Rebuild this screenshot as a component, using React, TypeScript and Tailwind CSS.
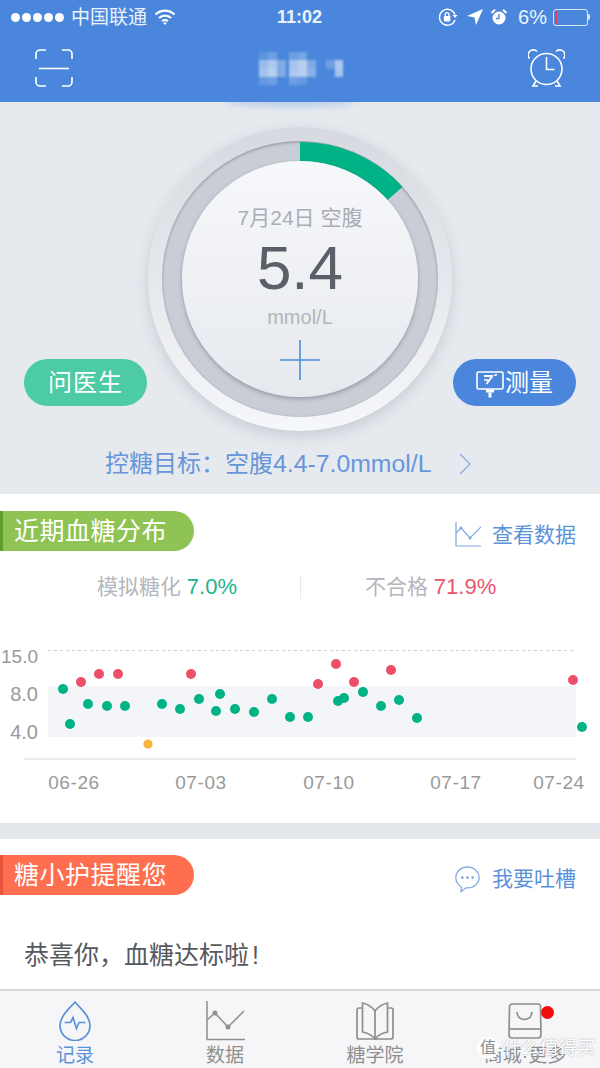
import React from "react";

const FONT = { fontFamily: '"Liberation Sans","Noto Sans CJK SC",sans-serif' };

const green: [number, number][] = [[63,39],[70,74],[88,54],[107,56],[125,56],[162,54],[180,59],[199,49],[216,61],[220,44],[235,59],[254,62],[272,49],[290,67],[308,67],[338,51],[344,48],[363,42],[381,56],[399,50],[417,68],[582,77]];
const red: [number, number][] = [[81,32],[99,24],[118,24],[191,24],[318,34],[336,14],[354,32],[391,20],[573,30]];

const mosaic: number[][] = [
  [258,50,9,8,.1],[267,50,9,8,.2],[288,50,9,8,.2],[297,50,9,8,.25],
  [258,58,9,9,.45],[267,58,9,9,.55],[276,58,9,9,.3],[288,58,9,9,.5],[297,58,9,9,.6],[306,58,9,9,.3],[325,58,9,9,.2],[334,58,9,9,.55],
  [258,67,9,8,.5],[267,67,9,8,.6],[276,67,9,8,.3],[288,67,9,8,.55],[297,67,9,8,.6],[306,67,9,8,.35],[334,67,9,8,.5],
  [258,75,9,8,.15],[267,75,9,8,.2],[288,75,9,8,.2],[297,75,9,8,.15],
];

function Wifi() {
  return (
    <svg width="22" height="18" viewBox="0 0 22 18" fill="none" stroke="white" strokeWidth="2.2">
      <path d="M1.5 6.5a13.5 13.5 0 0 1 19 0" />
      <path d="M5 10a8.6 8.6 0 0 1 12 0" />
      <path d="M8.2 13.2a4 4 0 0 1 5.6 0" />
      <path d="M11 17l-1.8-2a2.6 2.6 0 0 1 3.6 0z" fill="white" stroke="none" />
    </svg>
  );
}

function StatusRight() {
  return (
    <div className="flex items-center">
      <svg width="21" height="21" viewBox="0 0 21 21" fill="none" stroke="white" strokeWidth="1.4" className="mr-[9px]">
        <path d="M18 13a8 8 0 1 1 0-5.5" />
        <path d="M15.5 8h5l-2.5 3z" fill="white" stroke="none" />
        <rect x="6.8" y="9" width="6.6" height="5.4" rx=".8" fill="white" stroke="none" />
        <path d="M8.3 9V7.4a1.8 1.8 0 0 1 3.6 0V9" />
      </svg>
      <svg width="16" height="16" viewBox="0 0 16 16" className="mr-[8px]">
        <path d="M16 0 L9 16 L7.6 8.4 L0 7z" fill="white" />
      </svg>
      <svg width="16" height="17" viewBox="0 0 16 17" className="mr-[11px]">
        <circle cx="8" cy="9" r="6.5" fill="white" />
        <path d="M8 5v4.5H5" stroke="#4a87dc" strokeWidth="1.4" fill="none" />
        <path d="M0.5 4 L4 0.8 M15.5 4 L12 0.8" stroke="white" strokeWidth="2" />
      </svg>
      <span className="text-[20px] leading-none text-white/90 mr-[6px]">6%</span>
      <div className="flex items-center">
        <div className="w-[35px] h-[17px] rounded-[3px] border border-white/80 p-[1px] flex">
          <div className="w-[2px] h-full bg-[#e8405a]" />
        </div>
        <div className="w-[2px] h-[6px] bg-white/80 rounded-r-sm" />
      </div>
    </div>
  );
}

function ScanIcon() {
  return (
    <svg width="38" height="38" viewBox="0 0 38 38" fill="none" stroke="white" strokeWidth="1.6">
      <path d="M1 10V5a4 4 0 0 1 4-4h6" />
      <path d="M27 1h6a4 4 0 0 1 4 4v5" />
      <path d="M1 28v5a4 4 0 0 0 4 4h6" />
      <path d="M27 37h6a4 4 0 0 0 4-4v-5" />
      <path d="M4 19.5h30" />
    </svg>
  );
}

function AlarmIcon() {
  return (
    <svg width="37" height="38" viewBox="0 0 37 38" fill="none" stroke="white" strokeWidth="1.6">
      <circle cx="18.5" cy="20" r="15.5" />
      <path d="M18.5 8v12.5h8" />
      <path d="M1.5 9.5a5 5 0 0 1 7.5-7" />
      <path d="M35.5 9.5a5 5 0 0 0-7.5-7" />
      <path d="M8 32l-3 5h5M29 32l3 5h-5" />
    </svg>
  );
}

function MeterIcon() {
  return (
    <svg width="28" height="27" viewBox="0 0 28 27" fill="none" stroke="white" strokeWidth="1.6" className="mr-[1px] mt-[4px]">
      <rect x="1" y="1" width="26" height="17" rx="1.5" />
      <path d="M8 5h8a3 3 0 0 1-1.5 2.5L10.5 13" strokeWidth="2" />
      <path d="M8 9h4" strokeWidth="1.6" />
      <path d="M18 4.5l3-1" />
      <path d="M10 18.500h8v3h-8z" fill="white" stroke="none" />
      <path d="M12.500 21.500h3v5h-3z" fill="white" stroke="none" />
    </svg>
  );
}

function Gauge() {
  return (
    <div className="w-[304px] h-[304px] rounded-full bg-gradient-to-b from-[#d6d9df] to-[#f6f7fa] shadow-[0_5px_14px_rgba(90,100,120,0.22)] flex items-center justify-center shrink-0">
      <div className="relative w-[276px] h-[276px] rounded-full bg-[#c9cdd5] shadow-[inset_0_1px_3px_rgba(60,70,90,0.45)] flex items-center justify-center">
        <svg width="276" height="276" viewBox="0 0 276 276" className="absolute left-0 top-0">
          <path d="M138 1A137 137 0 0 1 240.6 45.7L225.7 59.1A118 118 0 0 0 138 20Z" fill="#00b386" />
        </svg>
        <div className="relative w-[236px] h-[236px] rounded-full bg-gradient-to-b from-[#f7f8fb] to-[#e6e9ee] shadow-[0_2px_4px_rgba(70,80,100,0.4)] flex flex-col items-center pt-[44px]">
          <div className="text-[21px] leading-[26px] text-[#a9adb4] whitespace-nowrap">7月24日 空腹</div>
          <div className="text-[62px] leading-[72px] mt-[1px] text-[#5b6068]">5.4</div>
          <div className="text-[20px] leading-[22px] mt-[2px] text-[#b2b5bb]">mmol/L</div>
          <svg width="42" height="42" viewBox="0 0 42 42" className="mt-[11px]" stroke="#4f8ade" strokeWidth="1.6">
            <path d="M21 1v40M1 21h40" />
          </svg>
        </div>
      </div>
    </div>
  );
}

function Pill({ children, bg, stripe }: { children: React.ReactNode; bg: string; stripe: string }) {
  return (
    <div className={`w-[194px] h-[40px] rounded-r-[20px] flex items-center overflow-hidden ${bg}`}>
      <div className={`w-[3px] h-full ${stripe}`} />
      <span className="ml-[11px] text-[25px] leading-none text-white tracking-[0.5px] whitespace-nowrap">{children}</span>
    </div>
  );
}

function Chart() {
  return (
    <svg width="600" height="150" viewBox="0 0 600 150" className="block" style={{ fontFamily: FONT.fontFamily }}>
      <rect x="48" y="36" width="528" height="51" fill="#f4f5f8" />
      <line x1="48" y1="0.5" x2="576" y2="0.5" stroke="#cfcfcf" strokeWidth="1" strokeDasharray="3 3" />
      <line x1="24" y1="109" x2="576" y2="109" stroke="#e2e4e8" strokeWidth="1.5" />
      <g fontSize="19" fill="#999" textAnchor="end">
        <text x="38" y="13">15.0</text>
        <text x="38" y="51" fontSize="20">8.0</text>
        <text x="38" y="89" fontSize="20">4.0</text>
      </g>
      <g fontSize="19" fill="#999" textAnchor="middle">
        <text x="74" y="139" letterSpacing=".6">06-26</text>
        <text x="201" y="139" letterSpacing=".6">07-03</text>
        <text x="329" y="139" letterSpacing=".6">07-10</text>
        <text x="456" y="139" letterSpacing=".6">07-17</text>
        <text x="559" y="139" letterSpacing=".6">07-24</text>
      </g>
      {green.map(([x, y], i) => <circle key={i} cx={x} cy={y} r="5" fill="#00b386" />)}
      {red.map(([x, y], i) => <circle key={i} cx={x} cy={y} r="5" fill="#ee4f68" />)}
      <circle cx="148" cy="94" r="4.6" fill="#f5b83d" />
    </svg>
  );
}

function Tab({ label, active, children }: { label: string; active?: boolean; children: React.ReactNode }) {
  return (
    <div className="relative flex flex-col items-center">
      <div className="h-[40px] mt-[10px] flex items-center justify-center">{children}</div>
      <div className={`mt-[4px] text-[19px] leading-[22px] whitespace-nowrap ${active ? "text-[#5b93d8]" : "text-[#8f8f8f]"}`}>{label}</div>
    </div>
  );
}

export default function App() {
  return (
    <div className="relative w-[600px] h-[1068px] overflow-hidden bg-white flex flex-col" style={FONT}>
      <div className="h-[102px] bg-[#4a87dc] shrink-0 flex flex-col relative">
        <div className="h-[34px] flex items-center justify-between pl-[11px] pr-[10px] text-white">
          <div className="flex items-center">
            <div className="flex gap-[2px] mr-[7px]">
              {[0, 1, 2, 3, 4].map((i) => <div key={i} className="w-[9px] h-[9px] rounded-full bg-white" />)}
            </div>
            <span className="text-[19px] leading-none mr-[7px] text-white/90">中国联通</span>
            <Wifi />
          </div>
          <span className="absolute left-[277px] text-[18px] leading-none font-bold text-white/90">11:02</span>
          <StatusRight />
        </div>
        <div className="flex-1 flex items-center justify-between pl-[35px] pr-[35px]">
          <ScanIcon />
          <svg width="84" height="33" viewBox="258 50 84 33" className="blur-[1px]">
            {mosaic.map((m, i) => <rect key={i} x={m[0]} y={m[1]} width={m[2]} height={m[3]} fill="white" opacity={m[4]} />)}
          </svg>
          <AlarmIcon />
        </div>
      </div>

      <div className="relative h-[392px] shrink-0 bg-[#e6e9ee] flex flex-col overflow-hidden">
        <div className="absolute left-[225px] top-[-6px] w-[130px] h-[11px] rounded-[50%] bg-[#bcd0ea] blur-[3px]" />
        <div className="flex items-end justify-between px-[24px] pt-[25px]">
          <div className="w-[123px] h-[47px] mb-[25px] -mr-[1px] rounded-full bg-[#4ccba5] flex items-center justify-center text-white text-[24px] tracking-[1px] leading-none shrink-0">问医生</div>
          <Gauge />
          <div className="w-[123px] h-[47px] mb-[25px] -ml-[1px] rounded-full bg-[#4a86dc] flex items-center justify-center text-white text-[24px] leading-none shrink-0">
            <MeterIcon />测量
          </div>
        </div>
        <div className="flex items-center pl-[105px] mt-[19px] text-[#6797d9] text-[24px] leading-[28px] whitespace-nowrap">
          <span>{"控糖目标\uFF1A空腹"}<span className="text-[24.8px]">4.4-7.0mmol/L</span></span>
          <svg width="14" height="24" viewBox="0 0 14 24" fill="none" stroke="#8aaee2" strokeWidth="1.3" className="ml-[26px]">
            <path d="M2 2l10 10L2 22" />
          </svg>
        </div>
      </div>

      <div className="h-[329px] shrink-0 bg-white flex flex-col">
        <div className="flex items-center justify-between pt-[17px] pr-[24px]">
          <Pill bg="bg-[#8fc353]" stripe="bg-[#5f9e2a]">近期血糖分布</Pill>
          <div className="flex items-center text-[#5b93d8] text-[21px] leading-none mt-[7px]">
            <svg width="26" height="25" viewBox="0 0 26 25" fill="none" stroke="#7ea6df" strokeWidth="1.2" className="mr-[11px]">
              <path d="M1 0v24h25" />
              <path d="M1 11l5-5 9 10 11-11" />
              <circle cx="6" cy="6" r="1.5" fill="#7ea6df" stroke="none" />
              <circle cx="15" cy="16" r="1.5" fill="#7ea6df" stroke="none" />
            </svg>
            查看数据
          </div>
        </div>
        <div className="flex items-center mt-[24px] h-[24px] text-[21px] leading-none text-[#b3b6bb]">
          <div className="w-[300px] pl-[97px] whitespace-nowrap">模拟糖化 <span className="text-[22px] text-[#1cb48c]">7.0%</span></div>
          <div className="w-px h-[24px] bg-[#e6e8eb]" />
          <div className="pl-[64px] whitespace-nowrap">不合格 <span className="text-[22px] text-[#e8566e]">71.9%</span></div>
        </div>
        <div className="mt-[51px]">
          <Chart />
        </div>
      </div>

      <div className="h-[16px] shrink-0 bg-[#e4e7ec]" />

      <div className="h-[150px] shrink-0 bg-white flex flex-col">
        <div className="flex items-center justify-between pt-[16px] pr-[24px]">
          <Pill bg="bg-[#ff6e4e]" stripe="bg-[#e8553a]">糖小护提醒您</Pill>
          <div className="flex items-center text-[#5b93d8] text-[21px] leading-none mt-[7px]">
            <svg width="27" height="28" viewBox="0 0 28 30" fill="none" stroke="#7ea6df" strokeWidth="1.3" className="mr-[11px]">
              <path d="M14 2C7 2 1.5 7 1.5 13.5c0 4.5 2.5 8 6 10l-.5 5 5.5-4c.5 0 1 .1 1.5.1 7 0 12.5-5 12.5-11.1S21 2 14 2z" />
              <circle cx="8.5" cy="13.5" r=".8" fill="#7ea6df" />
              <circle cx="14" cy="13.5" r=".8" fill="#7ea6df" />
              <circle cx="19.5" cy="13.5" r=".8" fill="#7ea6df" />
            </svg>
            我要吐槽
          </div>
        </div>
        <div className="pl-[24px] mt-[44px] text-[25px] leading-[32px] text-[#555a60] whitespace-nowrap">{"恭喜你\uFF0C血糖达标啦"}<span className="ml-[3px]">!</span></div>
      </div>

      <div className="flex-1 bg-[#f6f6f8] border-t-2 border-[#d9d9d9] grid grid-cols-4">
        <Tab label="记录" active>
          <svg width="32" height="40" viewBox="0 0 32 40" fill="none" stroke="#5b93d8" strokeWidth="1.7">
            <path d="M16 1C11 7 1 15 1 24.5a15 15 0 0 0 30 0C31 15 21 7 16 1z" />
            <path d="M5.5 21.5h6l2.5-5 3.5 11 2.5-6h6.5" />
          </svg>
        </Tab>
        <Tab label="数据">
          <svg width="40" height="40" viewBox="0 0 40 40" fill="none" stroke="#8f8f8f" strokeWidth="1.5">
            <path d="M2 0v38.5h38" />
            <path d="M2 19l8-7 13 14 16-16" />
            <circle cx="10" cy="12" r="2.5" fill="#8f8f8f" stroke="none" />
            <circle cx="23" cy="26" r="2.5" fill="#8f8f8f" stroke="none" />
          </svg>
        </Tab>
        <Tab label="糖学院">
          <svg width="38" height="38" viewBox="0 0 38 38" fill="none" stroke="#8f8f8f" strokeWidth="1.7">
            <path d="M19 9C16 5 11 2 6.5 1v29c5 1 9.5 3 12.5 7 3-4 7.5-6 12.5-7V1C27 2 22 5 19 9z" />
            <path d="M19 9v28" />
            <path d="M6.5 6H3a2 2 0 0 0-2 2v27a2 2 0 0 0 2 2h32a2 2 0 0 0 2-2V8a2 2 0 0 0-2-2h-3.5" />
          </svg>
        </Tab>
        <Tab label="商城·更多">
          <svg width="34" height="36" viewBox="0 0 34 36" fill="none" stroke="#8f8f8f" strokeWidth="1.7">
            <path d="M4 1h26a2.5 2.5 0 0 1 2.5 2.5L33 32a3 3 0 0 1-3 3H4a3 3 0 0 1-3-3L1.5 3.5A2.5 2.5 0 0 1 4 1z" />
            <path d="M1.5 26h31" />
            <path d="M9 9c0 10 15 10 15 0" />
          </svg>
          <div className="absolute left-[91px] top-[15px] w-[13px] h-[13px] rounded-full bg-[#f20d0d]" />
        </Tab>
      </div>

      <div className="absolute left-[477px] top-[1037px] flex items-center text-white text-[18.5px] leading-none whitespace-nowrap [text-shadow:0_0_2px_rgba(0,0,0,0.35)]">
        <span className="w-[22px] h-[22px] rounded-full bg-white/90 text-[#8f8f8f] text-[16px] flex items-center justify-center mr-[4px] [text-shadow:none]">值</span>
        什么值得买
      </div>
    </div>
  );
}
